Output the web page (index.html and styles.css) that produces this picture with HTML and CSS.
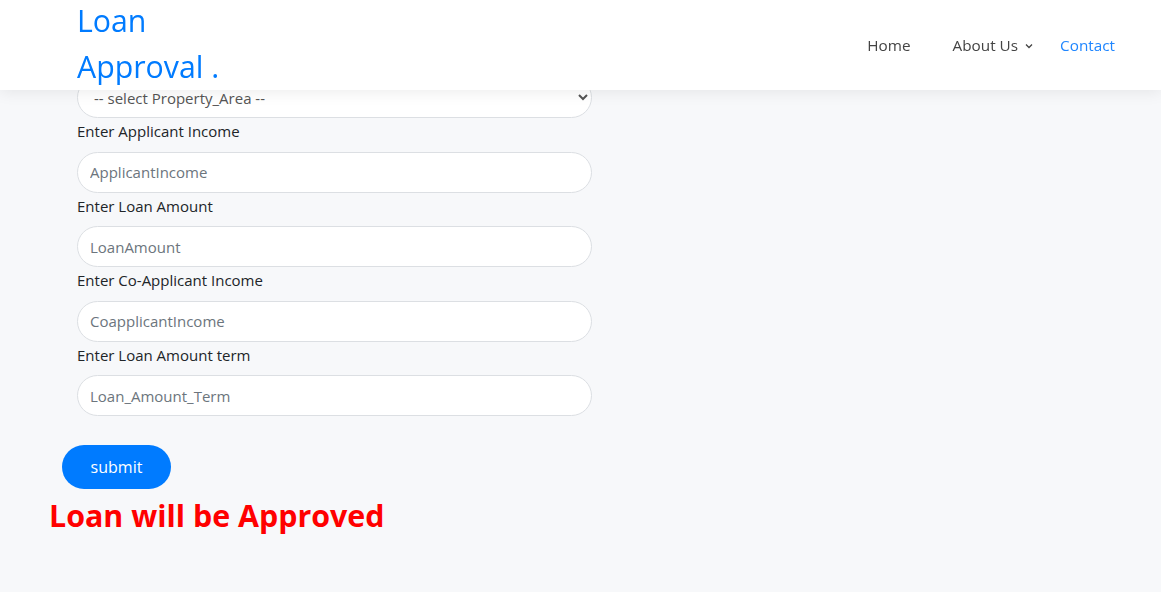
FILE: index.html
```html
<!DOCTYPE html>
<html lang="en">
<head>
<meta charset="utf-8">
<title>Loan Approval</title>
<link rel="stylesheet" href="styles.css">
</head>
<body>
<header class="topbar">
  <div class="logo">Loan Approval .</div>
  <nav class="nav">
    <a class="nav-link" href="#">Home</a>
    <a class="nav-link dropdown" href="#">About Us
      <svg class="chev" width="8" height="6" viewBox="0 0 8 6"><path d="M1 1.5 L4 4.5 L7 1.5" fill="none" stroke="#444" stroke-width="1.3"/></svg>
    </a>
    <a class="nav-link active" href="#">Contact</a>
  </nav>
</header>
<main class="page">
  <form class="form">
    <div class="fields">
      <select class="field select">
        <option>-- select Property_Area --</option>
      </select>
      <label class="label">Enter Applicant Income</label>
      <input class="field" type="text" placeholder="ApplicantIncome">
      <label class="label">Enter Loan Amount</label>
      <input class="field" type="text" placeholder="LoanAmount">
      <label class="label">Enter Co-Applicant Income</label>
      <input class="field" type="text" placeholder="CoapplicantIncome">
      <label class="label">Enter Loan Amount term</label>
      <input class="field" type="text" placeholder="Loan_Amount_Term">
    </div>
    <div class="actions">
      <button class="submit" type="button">submit</button>
    </div>
  </form>
  <h2 class="result">Loan will be Approved</h2>
</main>
</body>
</html>
```
FILE: styles.css
```css
* { box-sizing: border-box; }
html, body { margin: 0; padding: 0; }
body {
  background: #f7f8fa;
  font-family: "Open Sans", "Liberation Sans", sans-serif;
  color: #212529;
  height: 592px;
  overflow: hidden;
}
.topbar {
  position: fixed;
  top: 0; left: 0; right: 0;
  height: 90px;
  background: #fff;
  box-shadow: 0 2px 15px rgba(0,0,0,0.08);
  display: flex;
  align-items: center;
  justify-content: space-between;
  padding: 0 46px 0 77px;
  z-index: 10;
}
.logo {
  width: 160px;
  font-size: 30.3px;
  line-height: 46px;
  color: #007bff;
  margin-top: -3px;
}
.nav {
  display: flex;
  align-items: center;
}
.nav-link {
  font-size: 15.3px;
  color: #444;
  text-decoration: none;
  padding: 10px 0 10px 42px;
  display: flex;
  align-items: center;
}
.nav-link.active { color: #1f86ff; padding-left: 27px; }
.chev { margin-left: 7px; margin-top: 1px; }
.page {
  padding-top: 77px;
}
.form { margin: 0; }
.fields {
  display: flex;
  flex-direction: column;
  width: 515px;
  margin-left: 77px;
}
.field {
  height: 41px;
  width: 515px;
  border: 1px solid #dcdfe3;
  border-radius: 21px;
  background: #fff;
  padding: 0 12px;
  font-family: "Open Sans", "Liberation Sans", sans-serif;
  font-size: 15px;
  color: #495057;
}
.field::placeholder { color: #6c757d; }
.select {
  padding-left: 12px;
  color: #555;
}
.label {
  display: block;
  font-size: 15px;
  line-height: 24px;
  margin: 1px 0 8.5px;
  color: #212529;
}
.actions {
  margin: 29px 0 0 62px;
}
.submit {
  width: 109px;
  height: 44px;
  border: none;
  border-radius: 22px;
  background: #007bff;
  color: #fff;
  font-family: "Open Sans", "Liberation Sans", sans-serif;
  font-size: 16px;
  padding: 0;
}
.result {
  margin: 5px 0 0 49px;
  font-size: 30.4px;
  line-height: 44px;
  font-weight: 700;
  color: #ff0000;
}
```
